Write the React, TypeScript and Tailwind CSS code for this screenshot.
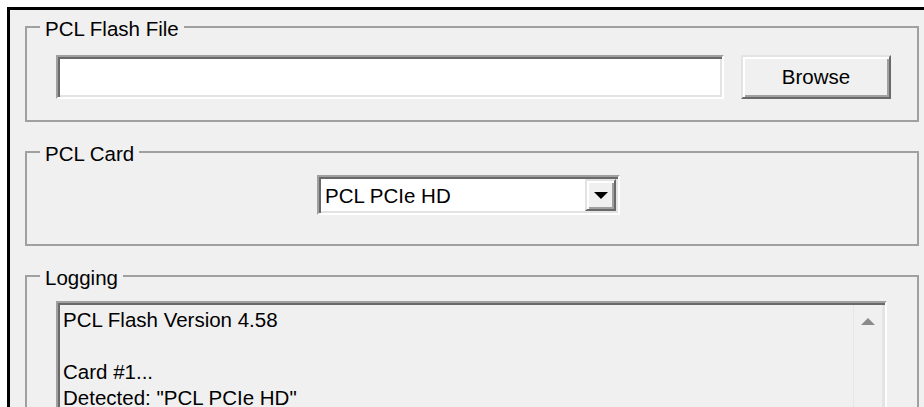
import React from "react";

const sunken =
  "border-2 border-t-[#a0a0a0] border-l-[#a0a0a0] border-b-white border-r-white shadow-[inset_2px_2px_0_#696969,inset_-2px_-2px_0_#e3e3e3]";
const raised =
  "border-2 border-t-[#e3e3e3] border-l-[#e3e3e3] border-b-[#696969] border-r-[#696969] shadow-[inset_2px_2px_0_#ffffff,inset_-2px_-2px_0_#a0a0a0] bg-[#f0f0f0]";

function GroupBox({
  title,
  body,
  children,
}: {
  title: string;
  body: string;
  children: React.ReactNode;
}) {
  return (
    <fieldset className="w-[894px] border-2 border-[#a0a0a0]">
      <legend className="ml-[13px] px-[5px] pt-[4px] leading-[24px]">{title}</legend>
      <div className={body}>{children}</div>
    </fieldset>
  );
}

export default function App() {
  const log = ["PCL Flash Version 4.58", "", "Card #1...", 'Detected: "PCL PCIe HD"'];
  return (
    <div
      className="w-[924px] h-[407px] overflow-hidden bg-white pl-[7px] pt-[7px] text-[20.5px] text-black"
      style={{ fontFamily: '"Liberation Sans", Arial, sans-serif' }}
    >
      <div className="w-[1000px] h-[460px] border-l-[3px] border-t-[3px] border-black bg-[#f0f0f0] pl-[15px] pt-[3px]">
        <div className="flex flex-col gap-[16px]">
          <GroupBox title="PCL Flash File" body="flex gap-[17px] pl-[29px] pt-[14px] pb-[21px]">
            <div className={`w-[668px] h-[44px] bg-white ${sunken}`} />
            <button className={`w-[150px] h-[44px] flex items-center justify-center leading-[24px] ${raised}`}>
              Browse
            </button>
          </GroupBox>

          <GroupBox title="PCL Card" body="pl-[290px] pt-[9px] pb-[29px]">
            <div className={`w-[303px] h-[40px] bg-white flex ${sunken}`}>
              <div className="flex-1 flex items-center pl-[6px] pt-[2px] leading-[24px]">PCL PCIe HD</div>
              <div className="py-[2px] pr-[2px]">
                <div className={`w-[31px] h-full flex items-center justify-center ${raised}`}>
                  <svg width="14" height="7" viewBox="0 0 14 7">
                    <polygon points="0,0 14,0 7,7" fill="#000" />
                  </svg>
                </div>
              </div>
            </div>
          </GroupBox>

          <GroupBox title="Logging" body="pl-[29px] pt-[11px]">
            <div className={`w-[831px] h-[130px] bg-[#f0f0f0] flex ${sunken}`}>
              <div className="flex-1 pl-[5px] pt-[4px] leading-[26px] whitespace-pre">
                {log.map((line, i) => (
                  <div key={i} className="h-[26px]">
                    {line}
                  </div>
                ))}
              </div>
              <div className="w-[30px] mt-[2px] mr-[2px] border-l border-r border-[#e6e6e6] flex justify-center pt-[13px]">
                <svg width="14" height="7" viewBox="0 0 14 7">
                  <polygon points="7,0 14,7 0,7" fill="#8a8a8a" />
                </svg>
              </div>
            </div>
          </GroupBox>
        </div>
      </div>
    </div>
  );
}
